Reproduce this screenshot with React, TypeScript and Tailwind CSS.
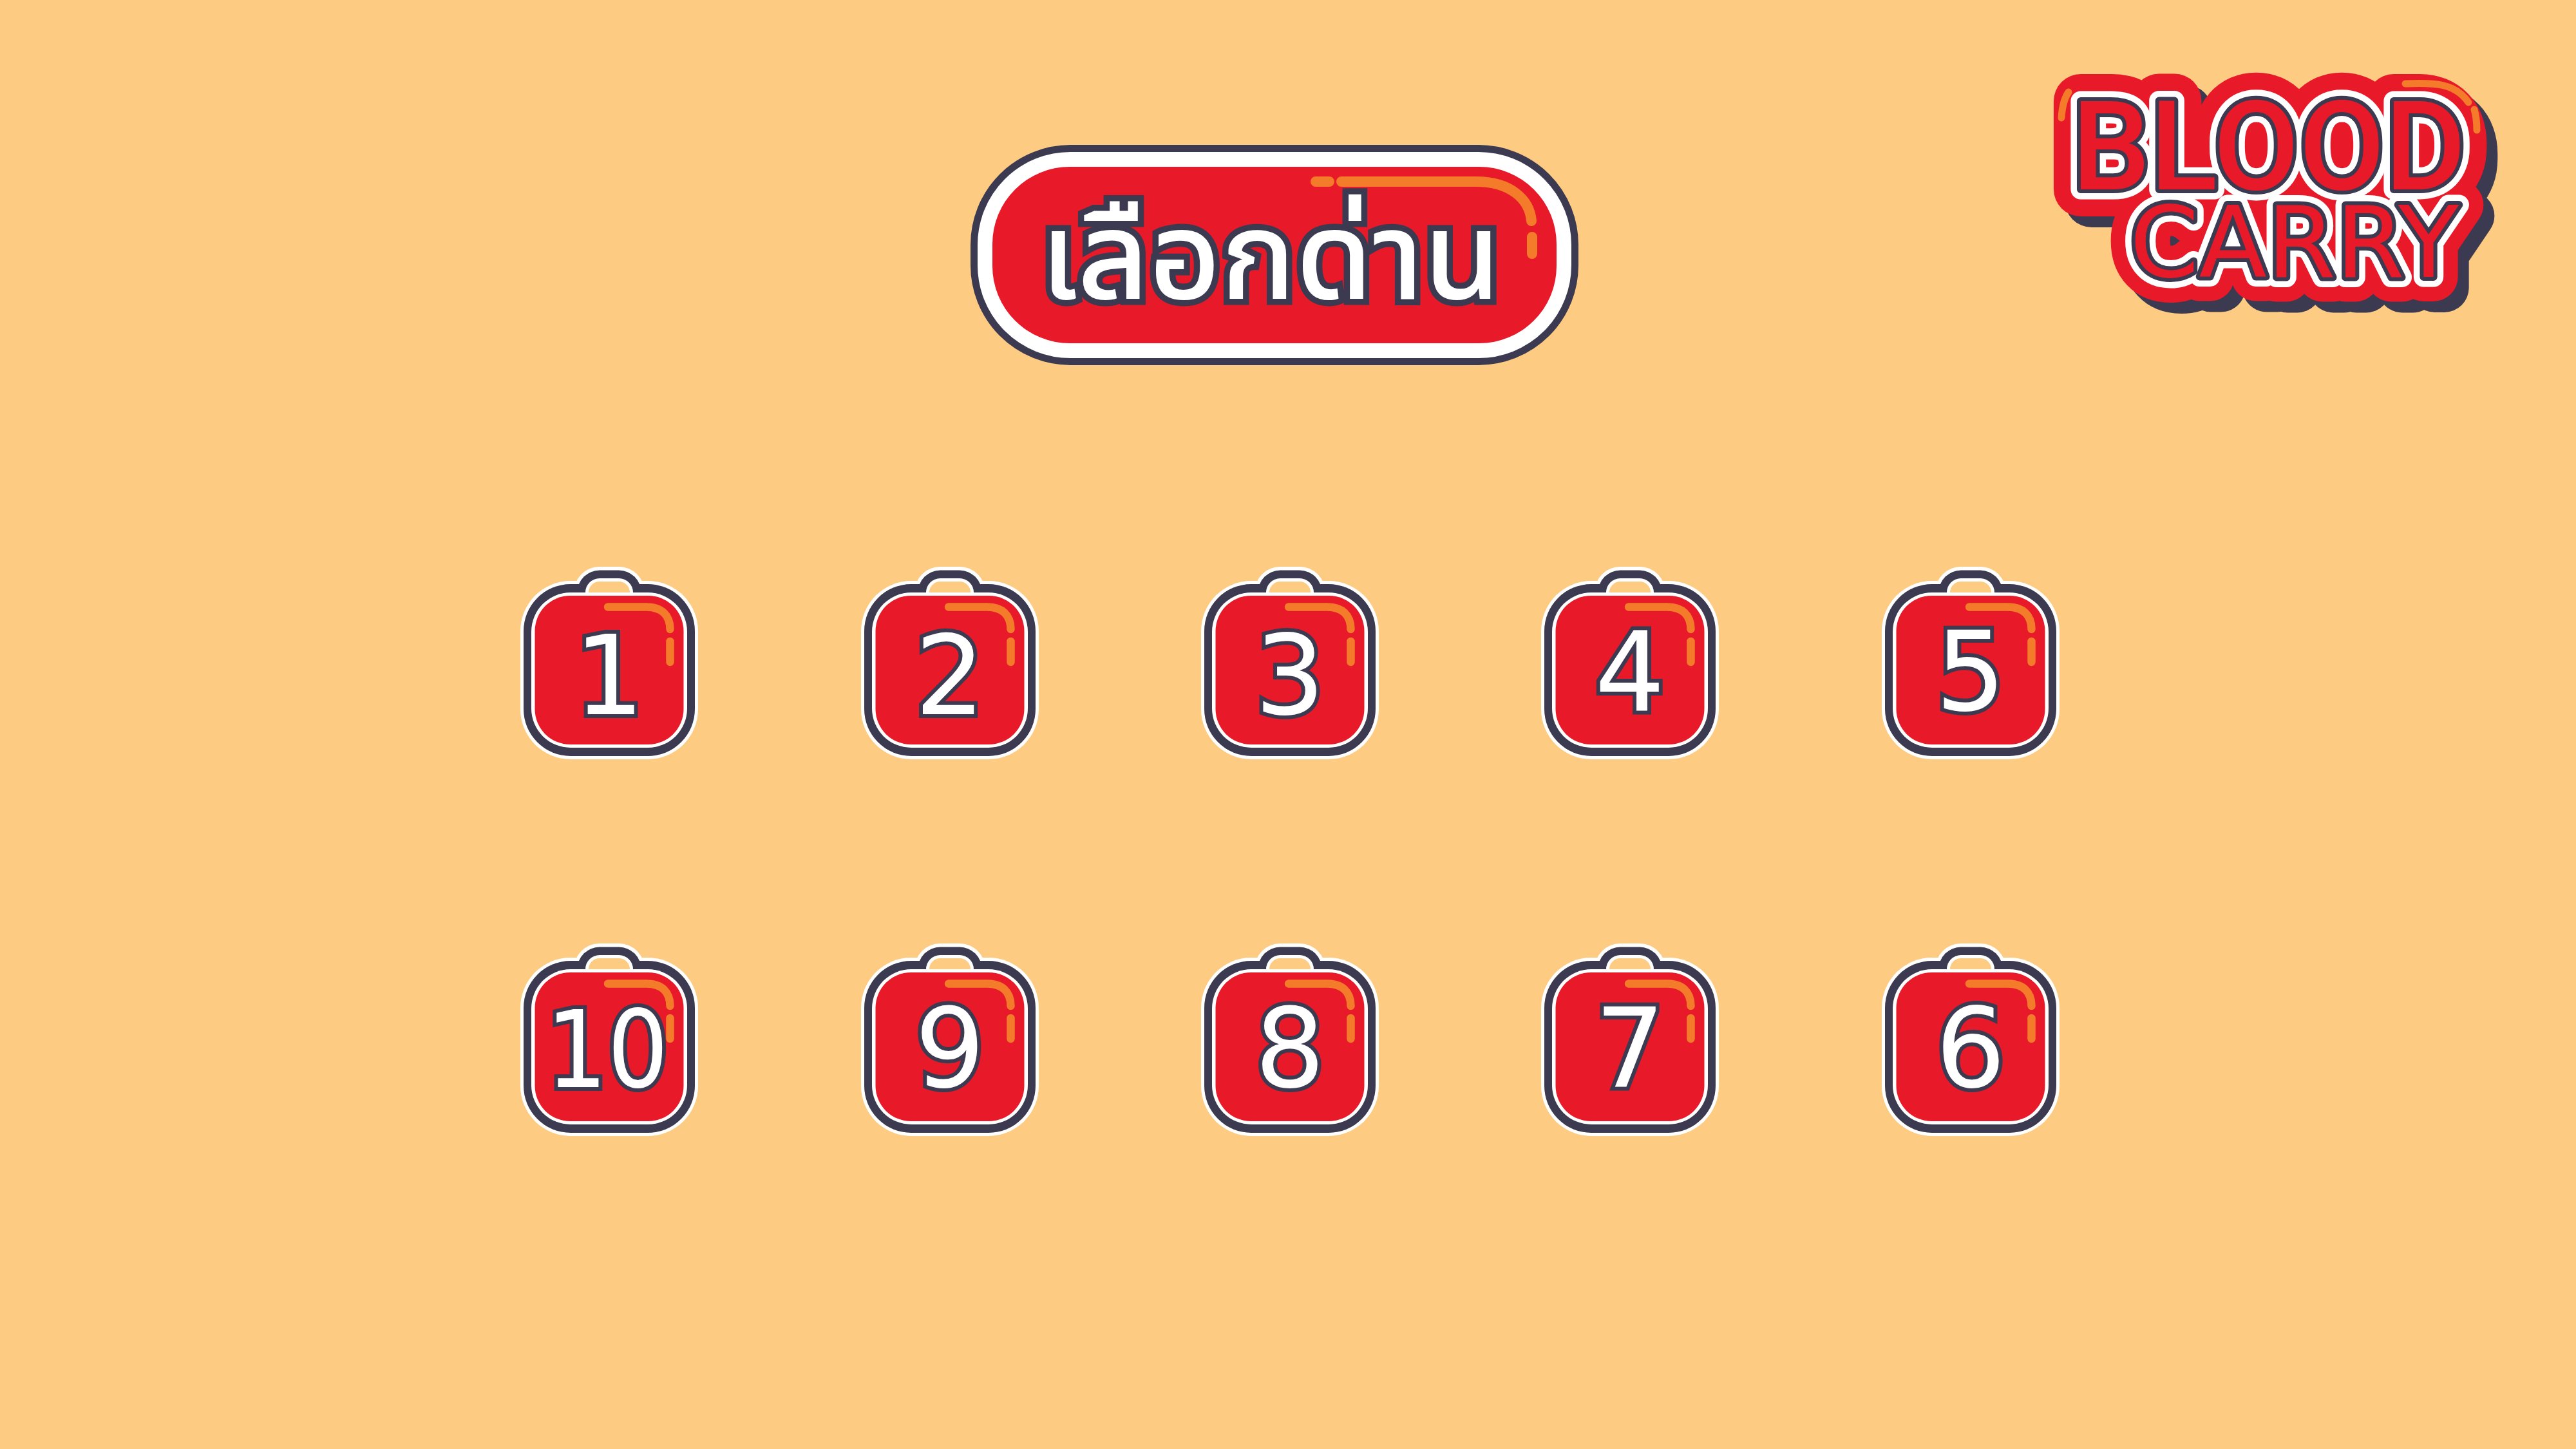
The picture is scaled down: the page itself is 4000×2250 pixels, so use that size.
const NAVY = "#3b3a50";
const RED = "#e81a2a";
const ORANGE = "#f37b29";
const PEACH = "#fecb82";

const LEVELS = [1, 2, 3, 4, 5, 10, 9, 8, 7, 6];

const OUTLINES = [
  { color: RED, top: 84, bottom: 76 },
  { color: "#ffffff", top: 31, bottom: 31 },
  { color: NAVY, top: 12, bottom: 12 },
];

function Logo() {
  return (
    <svg
      className="h-[369px] w-[689px] overflow-visible"
      viewBox="0 0 689 369"
      role="img"
      aria-label="Blood Carry"
      strokeLinejoin="round"
      strokeLinecap="round"
    >
      <g transform="translate(17 17)" fill={NAVY} stroke={NAVY}>
        <use href="#logo-blood" strokeWidth="84" />
        <use href="#logo-carry" strokeWidth="76" />
      </g>
      {OUTLINES.map((o) => (
        <g key={o.color} fill={o.color} stroke={o.color}>
          <use href="#logo-blood" strokeWidth={o.top} />
          <use href="#logo-carry" strokeWidth={o.bottom} />
        </g>
      ))}
      <g fill={RED}>
        <text id="logo-blood" x="28" y="179" fontSize="193" fontFamily="Roboto, sans-serif" fontWeight="500">
          BLOOD
        </text>
        <text id="logo-carry" x="118" y="315" fontSize="154" fontFamily="DejaVu Sans, sans-serif">
          CARRY
        </text>
      </g>
      <g fill="none" stroke={ORANGE} strokeWidth="11">
        <path d="M23 28C16 38 13 52 12 68" />
        <path d="M546 15C590 13 624 14 644 44" />
        <path d="M653 55C656 65 657 76 657 87" />
      </g>
    </svg>
  );
}

function Title() {
  return (
    <h1 className="relative mt-[110px] flex h-[342px] w-[944px] items-center justify-center rounded-[155px] border-[11px] border-[#3b3a50] bg-white p-[23px]">
      <span className="flex size-full items-center justify-center rounded-[120px] bg-[#e81a2a]">
        <span className="whitespace-nowrap pr-[12px] pt-[18px] font-['Noto_Sans_Thai','Noto_Sans','DejaVu_Sans',sans-serif] text-[192px] font-medium leading-none text-white [-webkit-text-stroke:19px_#3b3a50] [paint-order:stroke_fill] [stroke-linejoin:round]">
          เลือกด่าน
        </span>
      </span>
      <svg
        className="absolute -left-[11px] -top-[11px] h-[342px] w-[944px]"
        viewBox="0 0 944 342"
        fill="none"
        stroke={ORANGE}
        strokeWidth="16"
        strokeLinecap="round"
        aria-hidden="true"
      >
        <path d="M536 57H557M576 57H785C838 57 868 84 871 118M872 143V169" />
      </svg>
    </h1>
  );
}

function BloodBag({ level }: { level: number }) {
  const wide = level > 9;
  return (
    <button type="button" className="cursor-pointer" aria-label={`Level ${level}`}>
      <svg className="h-[299px] w-[276px]" viewBox="0 0 276 299">
        <g fill="#ffffff">
          <rect x="83" y="0" width="110" height="80" rx="40" />
          <rect x="0" y="22" width="276" height="277" rx="78" />
        </g>
        <g fill={NAVY}>
          <rect x="88.500" y="5.500" width="99" height="69" rx="34.500" />
          <rect x="5" y="27" width="266" height="267" rx="73" />
        </g>
        <path d="M101 41V40A22 22 0 0 1 123 18H153A22 22 0 0 1 175 40V41Z" fill="#ffffff" />
        <path d="M106 40A17 17 0 0 1 123 23H153A17 17 0 0 1 170 40Z" fill={PEACH} />
        <rect x="17" y="40" width="242" height="241" rx="61" fill="#ffffff" />
        <rect x="22.500" y="45" width="231" height="231" rx="55" fill={RED} />
        <path
          d="M136 62.500H196C220 62.500 232.500 76 232.500 97M232.500 116V148"
          fill="none"
          stroke={ORANGE}
          strokeWidth="12.500"
          strokeLinecap="round"
        />
        <text
          x={wide ? 135 : 138}
          y={level <= 3 ? 229 : 223}
          textAnchor="middle"
          fontSize={wide ? 166 : 171}
          fontFamily={wide ? "DejaVu Sans Condensed, DejaVu Sans, sans-serif" : "DejaVu Sans, sans-serif"}
          fill="#ffffff"
          stroke={NAVY}
          strokeWidth="12"
          paintOrder="stroke"
        >
          {level}
        </text>
      </svg>
    </button>
  );
}

export default function App() {
  return (
    <div className="min-h-screen bg-[#fecb82]">
      <header className="grid grid-cols-[1fr_auto_1fr] items-start pl-[80px] pr-[122px] pt-[115px]">
        <div className="col-start-2">
          <Title />
        </div>
        <div className="justify-self-end">
          <Logo />
        </div>
      </header>
      <main className="mt-[313px] grid grid-cols-5 justify-items-center gap-y-[286px] pl-[682px] pr-[676px]">
        {LEVELS.map((level) => (
          <BloodBag key={level} level={level} />
        ))}
      </main>
    </div>
  );
}
